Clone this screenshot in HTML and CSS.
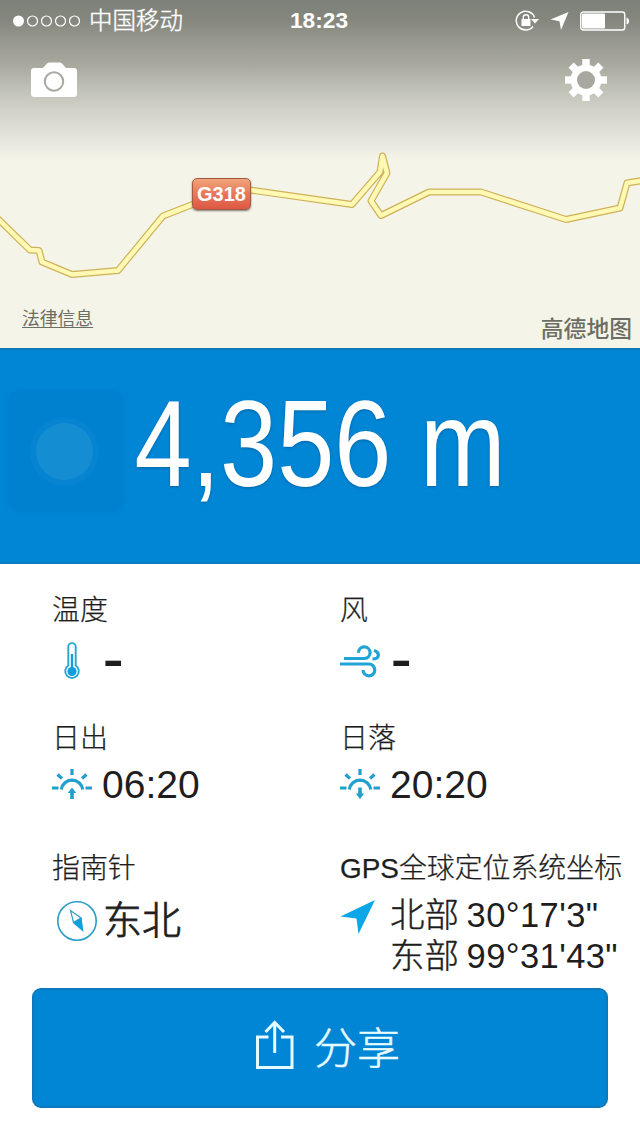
FILE: index.html
```html
<!DOCTYPE html>
<html lang="zh-CN">
<head>
<meta charset="UTF-8" />
<meta name="viewport" content="width=device-width, initial-scale=1" />
<title>海拔</title>
<link rel="stylesheet" href="styles.css">
</head>
<body>

<div class="map">
  <div class="shade">
    <div class="status">
      <div class="carrier">
        <svg width="69" height="14" viewBox="0 0 69 14">
          <circle class="dot-full" cx="6.500" cy="7" r="5.500" />
          <circle class="dot" cx="20.500" cy="7" r="5" />
          <circle class="dot" cx="34.500" cy="7" r="5" />
          <circle class="dot" cx="48.500" cy="7" r="5" />
          <circle class="dot" cx="62.500" cy="7" r="5" />
        </svg>
        <span>中国移动</span>
      </div>
      <div class="clock">18:23</div>
      <div class="indicators">
        <svg width="24" height="22" viewBox="0 0 24 22">
          <path d="M19.500 7.500 A9.400 9.400 0 1 0 18 16.500" fill="none" stroke="#fff" stroke-width="1.500" />
          <path d="M16 9 H24 L20 13.500 Z" fill="#fff" />
          <rect x="6.500" y="9" width="9" height="7" fill="#fff" />
          <path d="M8.300 9 V7.500 A2.700 2.700 0 0 1 13.700 7.500 V9" fill="none" stroke="#fff" stroke-width="1.400" />
        </svg>
        <svg width="19" height="20" viewBox="0 0 19 20">
          <path d="M18.500 1 L0.500 8.500 L9.500 10.200 L11 19 Z" fill="#fff" />
        </svg>
        <svg width="50" height="20" viewBox="0 0 50 20">
          <rect x="0.750" y="1" width="44" height="18" rx="2.500" fill="none" stroke="#fff" stroke-width="1.400" />
          <rect x="2" y="2.500" width="23" height="15" rx="1" fill="#fff" />
          <path d="M46.500 6.500 C50 7.500 50 12.500 46.500 13.500 Z" fill="#fff" />
        </svg>
      </div>
    </div>
    <div class="toolbar">
      <svg width="46" height="36" viewBox="0 0 46 36">
        <path d="M3 6 H12 L16 1.500 Q17 0.500 18.500 0.500 H28.500 Q30 0.500 31 1.500 L35 6 H43 Q46 6 46 9 V32 Q46 35 43 35 H3 Q0 35 0 32 V9 Q0 6 3 6 Z" fill="#fff" />
        <circle cx="23" cy="19.500" r="9.200" fill="none" stroke="#a9a9a1" stroke-width="2" />
      </svg>
      <svg width="42" height="42" viewBox="-21 -21 42 42">
        <g fill="#fff">
          <rect x="-3.700" y="-21" width="7.400" height="42" />
          <rect x="-3.700" y="-21" width="7.400" height="42" transform="rotate(45)" />
          <rect x="-3.700" y="-21" width="7.400" height="42" transform="rotate(90)" />
          <rect x="-3.700" y="-21" width="7.400" height="42" transform="rotate(135)" />
          <circle r="15.500" />
        </g>
        <circle r="9" fill="#a8a8a0" />
      </svg>
    </div>
  </div>

  <svg class="roads" viewBox="0 0 640 348">
    <path class="road-edge" d="M-5 216 L30 250 L39 250.500 L42 262 L72 274.500 L118 270.500 L163 216 L222 193 L250 190 L352 204.500 L380 172 L382.500 156 L387 173 L371 201 L381 215.500 L429 192 L481 192 L566 219.500 L620 208 L627 183 L645 180" />
    <path class="road-fill" d="M-5 216 L30 250 L39 250.500 L42 262 L72 274.500 L118 270.500 L163 216 L222 193 L250 190 L352 204.500 L380 172 L382.500 156 L387 173 L371 201 L381 215.500 L429 192 L481 192 L566 219.500 L620 208 L627 183 L645 180" />
  </svg>
  <span class="shield">G318</span>

  <div class="credits">
    <a class="legal">法律信息</a>
    <span class="provider">高德地图</span>
  </div>
</div>

<div class="altitude">
  <div class="touch"><div class="touch-dot"></div></div>
  <div class="altitude-value">4,356 m</div>
</div>

<div class="readings">
  <div class="cell">
    <div class="label">温度</div>
    <div class="value tall">
      <svg width="40" height="40" viewBox="0 0 40 40">
        <path d="M16.300 23.500 V4.800 A3.700 3.700 0 0 1 23.700 4.800 V23.500 A6.800 6.800 0 1 1 16.300 23.500 Z" fill="none" stroke="#2aa5cf" stroke-width="1.900" />
        <path d="M20 12 V29" stroke="#109fda" stroke-width="2.400" />
        <circle cx="20" cy="29.500" r="4.600" fill="#109fda" />
      </svg>
      <span class="dash">-</span>
    </div>
  </div>
  <div class="cell">
    <div class="label">风</div>
    <div class="value tall">
      <svg width="40" height="40" viewBox="0 0 40 40" fill="none" stroke="#1fa4d6" stroke-width="3.200">
        <path d="M4 16.500 H24.500 A5.800 5.800 0 1 0 18.500 10.700" />
        <path d="M0 22 H29 A5.900 5.900 0 1 1 23 28" />
        <path d="M34 8.500 C40 10 40 17 32.500 17" />
      </svg>
      <span class="dash">-</span>
    </div>
  </div>

  <div class="cell">
    <div class="label">日出</div>
    <div class="value short">
      <svg width="40" height="40" viewBox="0 0 40 40" fill="none" stroke="#229fcb" stroke-width="3.200">
        <path d="M9.300 24.500 A10.800 10.800 0 0 1 30.700 24.500" />
        <path d="M0 23 H6.500 M33.500 23 H40 M20 4 V10 M5.500 9.500 L10 13.500 M34.500 9.500 L30 13.500" />
        <path d="M18.200 34 V28 H15.800 L20 22.500 L24.200 28 H21.800 V34 Z" fill="#229fcb" stroke="none" />
      </svg>
      <span>06:20</span>
    </div>
  </div>
  <div class="cell">
    <div class="label">日落</div>
    <div class="value short">
      <svg width="40" height="40" viewBox="0 0 40 40" fill="none" stroke="#229fcb" stroke-width="3.200">
        <path d="M9.300 24.500 A10.800 10.800 0 0 1 30.700 24.500" />
        <path d="M0 23 H6.500 M33.500 23 H40 M20 4 V10 M5.500 9.500 L10 13.500 M34.500 9.500 L30 13.500" />
        <path d="M18.200 22.500 V28.500 H15.800 L20 34 L24.200 28.500 H21.800 V22.500 Z" fill="#229fcb" stroke="none" />
      </svg>
      <span>20:20</span>
    </div>
  </div>

  <div class="cell">
    <div class="label">指南针</div>
    <div class="value compass">
      <svg width="42" height="42" viewBox="0 0 42 42">
        <circle cx="21" cy="21" r="19.200" fill="none" stroke="#2b9fc6" stroke-width="1.600" />
        <path d="M14.500 10.500 L25 18 L17.500 22.500 Z" fill="#fff" stroke="#2b9fc6" stroke-width="1.200" />
        <path d="M25.500 17.500 L27.500 32 L17 23 Z" fill="#109fda" />
      </svg>
      <span class="heading">东北</span>
    </div>
  </div>
  <div class="cell">
    <div class="label">GPS全球定位系统坐标</div>
    <div class="value gps">
      <svg width="36" height="36" viewBox="0 0 36 36">
        <path d="M35 1 L0.500 17.500 L16.500 19.500 L18.500 35 Z" fill="#0da6e6" />
      </svg>
      <div class="coords">
        <div>北部 <span class="degrees">30°17'3"</span></div>
        <div>东部 <span class="degrees">99°31'43"</span></div>
      </div>
    </div>
  </div>
</div>

<button class="share">
  <svg width="40" height="50" viewBox="0 0 40 50" fill="none" stroke="#e6fbff" stroke-width="3">
    <path d="M14.500 17 H3.500 V47.500 H38 V17 H27" />
    <path d="M20.700 33 V3 M11.500 12 L20.700 2.500 L30 12" />
  </svg>
  <span>分享</span>
</button>

</body>
</html>
```

FILE: styles.css
```css
* {
  box-sizing: border-box;
}
body {
  margin: 0;
  width: 640px;
  height: 1136px;
  overflow: hidden;
  background: #fff;
  color: #1e1e1e;
  font-family: "Liberation Sans", "Noto Sans CJK SC", sans-serif;
}
svg {
  display: block;
  flex: none;
}
.map {
  position: relative;
  display: flex;
  flex-direction: column;
  justify-content: space-between;
  height: 348px;
  background: #f4f4e8;
}
.roads {
  position: absolute;
  top: 0;
  left: 0;
  width: 640px;
  height: 348px;
}
.road-edge {
  fill: none;
  stroke: #ceb15a;
  stroke-width: 7;
  stroke-linejoin: round;
}
.road-fill {
  fill: none;
  stroke: #fff9b4;
  stroke-width: 4.6;
  stroke-linejoin: round;
}
.shield {
  position: absolute;
  left: 192px;
  top: 178px;
  width: 59px;
  height: 32px;
  border: 1px solid #a65a43;
  border-radius: 5px;
  background: linear-gradient(#f0a57c, #e8775a 50%, #dc5843);
  box-shadow: 0 1px 2px rgba(0, 0, 0, 0.5);
  color: #fff;
  font-size: 20px;
  font-weight: bold;
  line-height: 30px;
  text-align: center;
}
.shade {
  height: 160px;
  background: linear-gradient(#7d8179 0, #85877e 20px, #96978d 40px, #a9a9a0 66px, #bdbeb4 86px, #d3d3ca 112px, #e4e4db 138px, #f4f4e8 160px);
}
.status {
  display: grid;
  grid-template-columns: 1fr auto 1fr;
  align-items: center;
  height: 41px;
  padding: 0 10px 0 12px;
  color: #fff;
}
.carrier {
  display: flex;
  align-items: center;
  gap: 8px;
  font-size: 23.500px;
  font-weight: 300;
  line-height: 40px;
  -webkit-text-stroke: 0.4px #fff;
}
.dot-full {
  fill: #fff;
}
.dot {
  fill: none;
  stroke: #fff;
  stroke-width: 1.2;
}
.clock {
  padding-right: 4px;
  font-size: 22.700px;
  font-weight: bold;
}
.indicators {
  display: flex;
  align-items: center;
  justify-content: flex-end;
  gap: 11px;
}
.toolbar {
  display: flex;
  justify-content: space-between;
  align-items: center;
  height: 78px;
  padding: 0 33px 0 31px;
}
.credits {
  position: relative;
  display: flex;
  justify-content: space-between;
  align-items: flex-end;
  padding: 0 8px 4px 22px;
  color: #6c6d64;
}
.legal {
  padding-bottom: 12px;
  font-size: 17.800px;
  line-height: 26px;
  text-decoration: underline;
  text-underline-offset: 2px;
}
.provider {
  font-size: 22.800px;
  font-weight: 500;
  line-height: 30px;
}
.altitude {
  position: relative;
  height: 216px;
  border-top: 2px solid #0c77b7;
  border-bottom: 2px solid #0b7cbd;
  background: #0086d5;
}
.altitude-value {
  color: #fff;
  font-size: 123px;
  line-height: 188px;
  text-align: center;
  white-space: nowrap;
  text-shadow: 0 1px 3px rgba(0, 50, 90, 0.4);
  transform: scaleX(0.835);
}
/* floating assistive button */
.touch {
  position: absolute;
  left: 8px;
  top: 40px;
  display: flex;
  align-items: center;
  justify-content: center;
  width: 116px;
  height: 122px;
  border-radius: 12px;
  background: #0081d0;
  box-shadow: 0 0 4px #0081d0;
}
.touch-dot {
  width: 57px;
  height: 57px;
  margin-right: 4px;
  border-radius: 50%;
  background: #148dd3;
  box-shadow: 0 0 0 6px #0684d1;
}
.readings {
  display: grid;
  grid-template-columns: 288px 1fr;
  grid-template-rows: 128px 130px 138px;
  height: 424px;
  padding: 28px 0 0 52px;
}
.label {
  padding-top: 1px;
  height: 36px;
  font-size: 27.900px;
  line-height: 36px;
  white-space: nowrap;
  -webkit-text-stroke: 0.25px #1e1e1e;
}
.label,
.heading,
.coords {
  font-weight: 300;
}
.value {
  display: flex;
  align-items: center;
  gap: 11px;
  font-size: 39px;
}
.tall {
  height: 68px;
}
.short {
  height: 58px;
}
.short span {
  margin-left: -1px;
}
.compass {
  height: 69px;
  padding-left: 4px;
  gap: 5px;
}
.heading {
  line-height: 50px;
  -webkit-text-stroke: 0.8px #1e1e1e;
}
.gps {
  align-items: flex-start;
  padding-top: 9px;
  gap: 14px;
}
.gps svg {
  margin-top: 4px;
}
.dash {
  padding-bottom: 4px;
  font-size: 44px;
  font-weight: bold;
  line-height: 40px;
  transform: scaleX(1.4);
  transform-origin: left;
}
.coords {
  font-size: 34.500px;
  line-height: 41px;
  white-space: nowrap;
  -webkit-text-stroke: 0.4px #1e1e1e;
}
.degrees {
  margin-left: -2px;
  letter-spacing: 0.4px;
  -webkit-text-stroke: 0;
}
.share {
  display: flex;
  align-items: center;
  justify-content: center;
  gap: 20px;
  width: 576px;
  height: 120px;
  margin: 0 32px;
  padding: 0 0 7px 14px;
  border: 2px solid #0b79bb;
  border-radius: 9px;
  background: #0086d5;
  color: #e6fbff;
  font-family: inherit;
  font-size: 43px;
  font-weight: 300;
  -webkit-text-stroke: 0.5px #e6fbff;
}
```
